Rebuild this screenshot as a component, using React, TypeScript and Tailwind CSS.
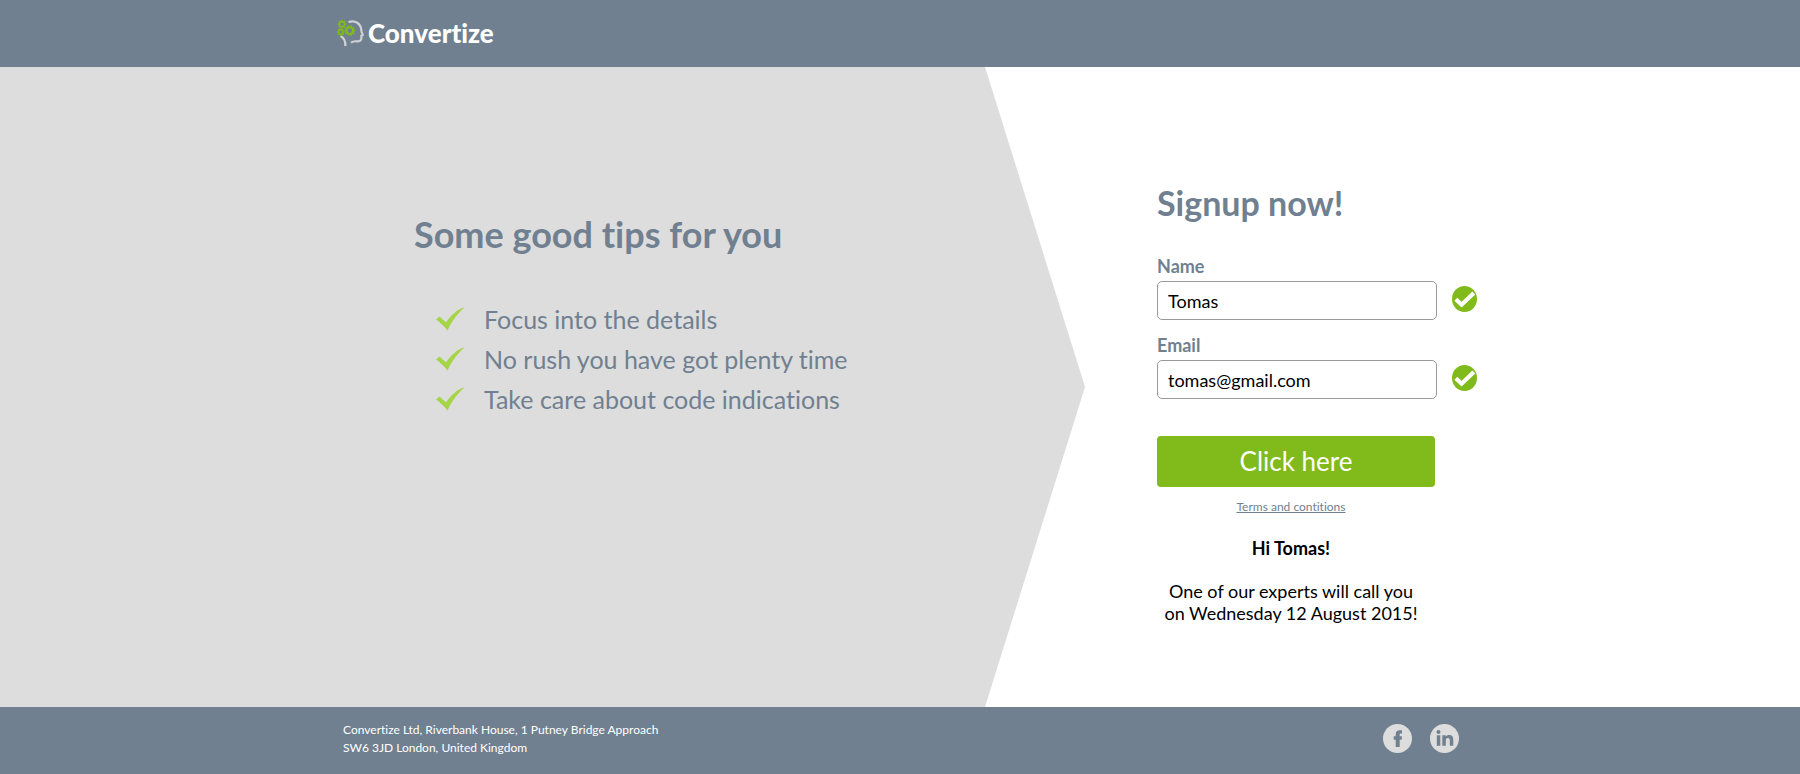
import React from "react";

const tips = [
  "Focus into the details",
  "No rush you have got plenty time",
  "Take care about code indications",
];

function Gear({ cx, cy, r, teeth, width }: { cx: number; cy: number; r: number; teeth: number; width: number }) {
  return (
    <g stroke="#80ba1b" fill="none">
      <circle cx={cx} cy={cy} r={r} strokeWidth={width} />
      {Array.from({ length: teeth }, (_, i) => {
        const a = (i / teeth) * Math.PI * 2;
        const inner = r + width / 2 - 0.3;
        const outer = inner + 1.3;
        return (
          <line
            key={i}
            x1={cx + Math.cos(a) * inner}
            y1={cy + Math.sin(a) * inner}
            x2={cx + Math.cos(a) * outer}
            y2={cy + Math.sin(a) * outer}
            strokeWidth={1.5}
          />
        );
      })}
    </g>
  );
}

function LogoMark() {
  return (
    <svg viewBox="0 0 28 28" className="h-7 w-7" aria-hidden="true">
      <path
        d="M11.500 3C18 .8 24 4.500 24.300 11c0 1.800.5 2.900 1.300 4.400.3.800 0 1.200-1.200 1.500.1 1.400.1 2.600-.3 3.800-.7 2-2.500 1.900-4.600 1.600-2.100-.2-3.600.1-5.500 1.400M3.500 17C7 19 8.800 21.500 8.300 27"
        fill="none"
        stroke="#cfd2d5"
        strokeWidth="2.200"
      />
      <Gear cx={5} cy={5.2} r={2.6} teeth={8} width={1.7} />
      <Gear cx={3.8} cy={13} r={2.2} teeth={8} width={1.6} />
      <Gear cx={12.8} cy={11.6} r={3.4} teeth={10} width={2.2} />
    </svg>
  );
}

function Tick() {
  return (
    <svg viewBox="0 0 28 24" className="h-6 w-7 shrink-0" aria-hidden="true">
      <path d="M0 12.500 3.500 9.500 10 15.500C15 8 21 3 27.500.5L28 1C21 7 16 14 11.500 23.500 8 19 4 15.500 0 12.500Z" fill="#a6d447" />
    </svg>
  );
}

function Valid() {
  return (
    <svg viewBox="0 0 25 26" className="h-[26px] w-[25px] shrink-0" role="img" aria-label="Valid">
      <ellipse cx="12.500" cy="13" rx="12.500" ry="13" fill="#80ba1b" />
      <path d="M3.800 13.200 9.600 18.700 21.800 7" fill="none" stroke="#fff" strokeWidth="4.200" />
    </svg>
  );
}

function Field({ id, label, type, value }: { id: string; label: string; type: string; value: string }) {
  return (
    <div className="flex flex-col gap-[3px]">
      <label htmlFor={id} className="text-lg leading-6 font-bold">
        {label}
      </label>
      <div className="flex items-start gap-[15px]">
        <input
          id={id}
          type={type}
          defaultValue={value}
          className="h-[39px] w-[280px] rounded-[5px] border border-[#999] bg-white px-2.5 text-lg text-black"
        />
        <span className="pt-[5px]">
          <Valid />
        </span>
      </div>
    </div>
  );
}

export default function App() {
  return (
    <div className="flex min-h-screen flex-col bg-white font-['Lato',sans-serif] text-[#708090] [font-variant-ligatures:none]">
      <header className="bg-[#708090] pt-3 pb-[13px]">
        <div className="mx-auto flex h-[42px] max-w-[1126px] items-center">
          <a href="#" className="flex items-center gap-[3px] text-[26px] leading-8 font-black text-white">
            <LogoMark />
            Convertize
          </a>
        </div>
      </header>

      <main className="flex flex-1">
        <section className="flex w-[calc(50%+185px)] justify-end bg-[#ddd] [clip-path:polygon(0_0,calc(100%-100px)_0,100%_50%,calc(100%-100px)_100%,0_100%)]">
          <div className="w-[671px] pt-[147px]">
            <h1 className="text-[36px] leading-10 font-bold">Some good tips for you</h1>
            <ul className="mt-[45px] pl-[22px] text-[25px] leading-10">
              {tips.map((tip) => (
                <li key={tip} className="flex items-center gap-5">
                  <Tick />
                  {tip}
                </li>
              ))}
            </ul>
          </div>
        </section>

        <section className="flex-1 pt-[116px] pb-16 pl-[72px]">
          <h2 className="text-[34px] leading-10 font-bold">Signup now!</h2>
          <form className="mt-[31px]" onSubmit={(e) => e.preventDefault()}>
            <div className="flex flex-col gap-[13px]">
              <Field id="name" label="Name" type="text" value="Tomas" />
              <Field id="email" label="Email" type="email" value="tomas@gmail.com" />
            </div>
            <button type="submit" className="mt-[37px] h-[51px] w-[278px] rounded-[4px] bg-[#80ba1b] text-[26px] text-white">
              Click here
            </button>
          </form>
          <div className="w-[268px] text-center">
            <a href="#" className="mt-3 block text-xs leading-4 underline">
              Terms and contitions
            </a>
            <div className="mt-[22px] text-lg leading-[22px] text-black">
              <p className="font-bold">Hi Tomas!</p>
              <p className="mt-[21px]">
                One of our experts will call you
                <br />
                on Wednesday 12 August 2015!
              </p>
            </div>
          </div>
        </section>
      </main>

      <footer className="bg-[#708090] pt-3.5 pb-[17px] text-white">
        <div className="mx-auto flex max-w-[1126px] items-start justify-between pr-1 pl-1.5">
          <address className="text-xs leading-[18px] not-italic">
            Convertize Ltd, Riverbank House, 1 Putney Bridge Approach
            <br />
            SW6 3JD London, United Kingdom
          </address>
          <nav className="flex gap-[18px] pt-[3px]">
            <a href="#" aria-label="Facebook">
              <svg viewBox="0 0 29 29" className="h-[29px] w-[29px]">
                <circle cx="14.500" cy="14.500" r="14.500" fill="#ddd" />
                <path d="M12.700 23V15.700H10.700V12.200H12.700V10.300C12.700 7.300 14.200 6.200 16.700 6.200H19V9.400H17.700C16.900 9.400 16.700 9.800 16.700 10.500V12.200H19L18.700 15.700H16.700V23Z" fill="#708090" />
              </svg>
            </a>
            <a href="#" aria-label="LinkedIn">
              <svg viewBox="0 0 29 29" className="h-[29px] w-[29px]">
                <circle cx="14.500" cy="14.500" r="14.500" fill="#ddd" />
                <path d="M6.800 11.200H10.300V21.800H6.800ZM12.300 11.200H15.700V12.700C16.400 11.600 17.500 11 19 11 22.200 11 23.300 12.900 23.300 16V21.800H19.800V16.600C19.800 15 19.300 14 17.900 14S15.800 15 15.800 16.400V21.800H12.300Z" fill="#708090" />
                <circle cx="8.500" cy="8" r="2" fill="#708090" />
              </svg>
            </a>
          </nav>
        </div>
      </footer>
    </div>
  );
}
